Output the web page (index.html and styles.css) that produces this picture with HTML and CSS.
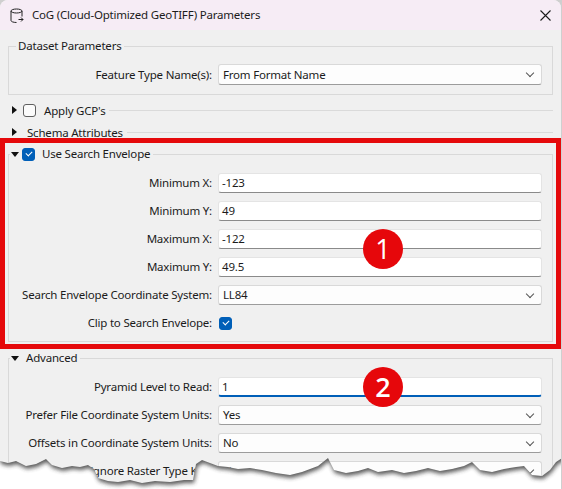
FILE: index.html
```html
<!DOCTYPE html>
<html lang="en">
<head>
    <meta charset="UTF-8">
    <title>CoG (Cloud-Optimized GeoTIFF) Parameters</title>
    <link rel="stylesheet" href="styles.css">
</head>
<body>
<div class="window">
    <div class="titlebar">
        <svg class="app-icon" width="14" height="16" viewBox="0 0 14 16">
            <ellipse cx="6.5" cy="3" rx="5.5" ry="2" fill="none" stroke="#222" stroke-width="1"/>
            <path d="M1 3v9.5c0 1.1 2.4 2 5.5 2M12 3v5.5M8.5 11.5h4.5M11 9.5l2 2-2 2" fill="none" stroke="#222" stroke-width="1"/>
        </svg>
        <span class="title">CoG (Cloud-Optimized GeoTIFF) Parameters</span>
        <svg class="close" width="11" height="11" viewBox="0 0 11 11">
            <path d="M0.5 0.5l10 10M10.5 0.5l-10 10" stroke="#1a1a1a" stroke-width="1.1"/>
        </svg>
    </div>

    <div class="content">
        <fieldset class="group">
            <legend>Dataset Parameters</legend>
            <div class="row">
                <label>Feature Type Name(s):</label>
                <div class="combo tall">From Format Name</div>
            </div>
        </fieldset>

        <div class="collapsed">
            <span class="tri right"></span>
            <span class="check"></span>
            <span class="caption">Apply GCP's</span>
        </div>
        <div class="collapsed">
            <span class="tri right"></span>
            <span class="caption">Schema Attributes</span>
        </div>

        <fieldset class="group section">
            <legend><span class="tri down"></span><span class="check on"></span><span class="caption">Use Search Envelope</span></legend>
            <div class="row"><label>Minimum X:</label><div class="field">-123</div></div>
            <div class="row"><label>Minimum Y:</label><div class="field">49</div></div>
            <div class="row"><label>Maximum X:</label><div class="field">-122</div></div>
            <div class="row"><label>Maximum Y:</label><div class="field">49.5</div></div>
            <div class="row"><label>Search Envelope Coordinate System:</label><div class="combo">LL84</div></div>
            <div class="row"><label>Clip to Search Envelope:</label><div><span class="check on"></span></div></div>
        </fieldset>

        <fieldset class="group section">
            <legend><span class="tri down"></span><span class="caption plain">Advanced</span></legend>
            <div class="row"><label>Pyramid Level to Read:</label><div class="field focus">1</div></div>
            <div class="row"><label>Prefer File Coordinate System Units:</label><div class="combo">Yes</div></div>
            <div class="row"><label>Offsets in Coordinate System Units:</label><div class="combo">No</div></div>
            <div class="row"><label>Ignore Raster Type Key:</label><div class="combo">No</div></div>
        </fieldset>
    </div>

    <!-- annotations -->
    <div class="highlight"></div>
    <div class="badge one">1</div>
    <div class="badge two">2</div>

    <svg class="torn" width="562" height="49" viewBox="0 0 562 49">
        <defs>
            <clipPath id="paper">
                <polygon points="0,21 8,23 16,21 26,26 36,24 46,19 52,25 62,28 72,26 80,27 88,25 94,29 98,38 108,41 118,42 130,40 142,43 155,41 170,42 184,40 193,40 196,24 202,20 210,23 218,26 228,27 238,29 250,28 262,30 276,33 290,35 302,32 318,26 328,18 334,30 346,33 358,31 368,28 378,32 392,30 404,33 416,31 428,28 440,31 452,29 464,26 472,22 480,30 492,32 504,29 516,27 524,26 532,35 542,36 550,30 556,22 562,18 562,49 0,49"/>
            </clipPath>
            <filter id="soft" x="-5%" y="-50%" width="110%" height="200%">
                <feGaussianBlur stdDeviation="2"/>
            </filter>
        </defs>
        <polygon fill="#fff" points="0,21 8,23 16,21 26,26 36,24 46,19 52,25 62,28 72,26 80,27 88,25 94,29 98,38 108,41 118,42 130,40 142,43 155,41 170,42 184,40 193,40 196,24 202,20 210,23 218,26 228,27 238,29 250,28 262,30 276,33 290,35 302,32 318,26 328,18 334,30 346,33 358,31 368,28 378,32 392,30 404,33 416,31 428,28 440,31 452,29 464,26 472,22 480,30 492,32 504,29 516,27 524,26 532,35 542,36 550,30 556,22 562,18 562,49 0,49"/>
        <g clip-path="url(#paper)">
            <polygon fill="#333" opacity="0.8" filter="url(#soft)" transform="translate(1,3)" points="-10,-20 0,21 8,23 16,21 26,26 36,24 46,19 52,25 62,28 72,26 80,27 88,25 94,29 98,38 108,41 118,42 130,40 142,43 155,41 170,42 184,40 193,40 196,24 202,20 210,23 218,26 228,27 238,29 250,28 262,30 276,33 290,35 302,32 318,26 328,18 334,30 346,33 358,31 368,28 378,32 392,30 404,33 416,31 428,28 440,31 452,29 464,26 472,22 480,30 492,32 504,29 516,27 524,26 532,35 542,36 550,30 556,22 562,18 572,18 572,-20"/>
        </g>
    </svg>
</div>
</body>
</html>
```

FILE: styles.css
```css
* {
    box-sizing: border-box;
}
body {
    margin: 0;
    width: 562px;
    height: 489px;
    overflow: hidden;
    background: #cfcfcf;
    font-family: "Noto Sans", sans-serif;
    font-size: 11.5px;
    letter-spacing: -0.2px;
    color: #1b1b1b;
}
.window {
    position: relative;
    width: 561px;
    height: 489px;
    background: #f0f0f0;
    border-radius: 8px 8px 0 0;
    overflow: hidden;
}

.titlebar {
    display: flex;
    align-items: center;
    height: 30px;
    padding: 0 10px 0 10px;
    background: #f6ecf5;
}
.app-icon {
    margin: 1px 8px 0 0;
}
.title {
    flex: 1;
    line-height: 16px;
}
.close {
    margin-top: 1px;
}

.content {
    padding: 0 8px;
}

/* group boxes */
.group {
    margin: 8px 0 0;
    padding: 10px 10px 9px 9px;
    border: 1px solid #d9d9d9;
    min-width: 0;
}
.group legend {
    padding: 0 2px;
    margin-left: -2px;
    line-height: 16px;
}
.section {
    margin-top: 6px;
    padding-top: 11px;
    padding-bottom: 8px;
    display: flex;
    flex-direction: column;
    gap: 8px;
}
.section legend {
    display: flex;
    align-items: center;
    margin-left: -8px;
    padding: 0 3px 0 1px;
}
.section + .section {
    margin-top: 8px;
}

.row {
    display: grid;
    grid-template-columns: 194px 1fr;
    column-gap: 6px;
    align-items: center;
    min-height: 20px;
}
.row label {
    text-align: right;
    white-space: nowrap;
    line-height: 20px;
}
.row .check {
    display: block;
    margin-left: 1px;
}

.field, .combo {
    position: relative;
    height: 20px;
    line-height: 18px;
    padding-left: 3px;
    background: #fff;
    border: 1px solid #e4e4e4;
    border-bottom-color: #8a8a8a;
    border-radius: 3px;
}
.field.focus {
    border-bottom: 2px solid #005fb8;
}
.combo {
    padding-left: 4px;
    background: #fdfdfd;
    border-color: #d9d9d9;
    border-bottom-color: #9c9c9c;
}
.combo.tall {
    height: 21px;
    line-height: 19px;
}
.combo::after {
    content: "";
    position: absolute;
    right: 8px;
    top: 5px;
    width: 5px;
    height: 5px;
    border-right: 1px solid #555;
    border-bottom: 1px solid #555;
    transform: rotate(45deg);
}

/* collapsed sections */
.collapsed {
    display: flex;
    align-items: center;
    height: 16px;
    margin-top: 6px;
    padding-left: 4px;
}
.group + .collapsed {
    margin-top: 7px;
}
.collapsed::after {
    content: "";
    flex: 1;
    margin-left: 4px;
    border-top: 1px solid #dadada;
}

.tri {
    display: inline-block;
    width: 0;
    height: 0;
}
.tri.right {
    border-top: 4.5px solid transparent;
    border-bottom: 4.5px solid transparent;
    border-left: 5px solid #111;
    margin-right: 10px;
}
.collapsed .check + .caption {
    margin-left: 8px;
}
.collapsed .tri.right + .check {
    margin-left: -4px;
}
.tri.down {
    border-left: 4.5px solid transparent;
    border-right: 4.5px solid transparent;
    border-top: 5px solid #111;
    margin-right: 3px;
}
.tri.down + .caption.plain {
    margin-left: 4px;
}

.check {
    display: inline-block;
    position: relative;
    width: 13px;
    height: 13px;
    border: 1px solid #5f5f5f;
    border-radius: 3px;
    background: #fbfbfb;
}
.check.on {
    background: #005fb8;
    border-color: #005fb8;
}
.check.on::after {
    content: "";
    position: absolute;
    left: 3px;
    top: 2px;
    width: 5px;
    height: 3px;
    border-left: 1px solid #fff;
    border-bottom: 1px solid #fff;
    transform: rotate(-45deg);
}
.section legend .check + .caption {
    margin-left: 7px;
}

/* annotations over the screenshot */
.highlight {
    position: absolute;
    left: 0;
    top: 138px;
    width: 561px;
    height: 211px;
    border: 5px solid #e5090b;
}
.badge {
    position: absolute;
    left: 363px;
    width: 40px;
    height: 40px;
    border-radius: 50%;
    background: #e6070b;
    color: #fff;
    font-family: "Open Sans", sans-serif;
    font-size: 27px;
    letter-spacing: 0;
    line-height: 40px;
    text-align: center;
}
.badge.one {
    top: 229px;
}
.badge.two {
    top: 367px;
    font-weight: 600;
}
.torn {
    position: absolute;
    left: 0;
    top: 440px;
}
```
